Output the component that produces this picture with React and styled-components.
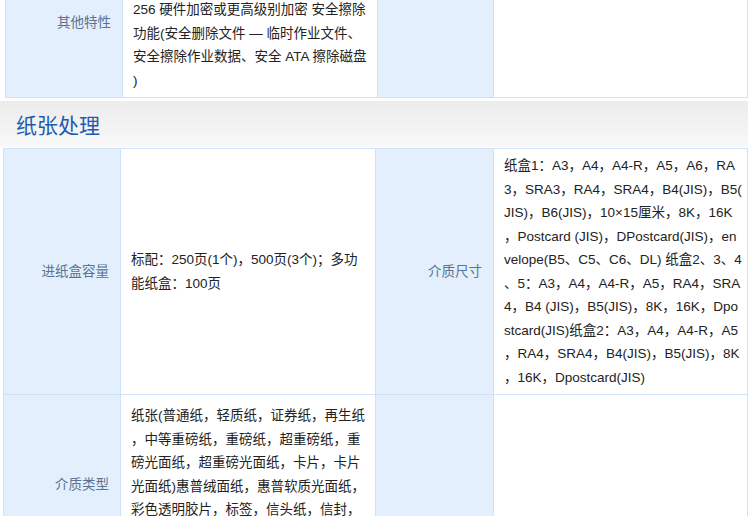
import React from "react";
import styled, { createGlobalStyle } from "styled-components";

const GlobalStyle = createGlobalStyle`
  * { box-sizing: border-box; }
  body {
    margin: 0;
    background: #fff;
    font-family: "Liberation Sans", "Noto Sans CJK SC", sans-serif;
    overflow: hidden;
  }
`;

const Page = styled.div`
  width: 748px;
  padding-left: 3px;
`;

const SpecTable = styled.div`
  display: grid;
  grid-template-columns: 117px 255px ${(p) => (p.$shift ? 118 - p.$shift : 118)}px 1fr;
  border-top: 1px solid #cfe2f6;
  border-left: 1px solid #cfe2f6;
  margin-top: ${(p) => p.$offset || 0}px;
  margin-left: ${(p) => p.$shift || 0}px;
`;

const Label = styled.div`
  display: flex;
  align-items: ${(p) => (p.$top ? "flex-start" : "center")};
  justify-content: flex-end;
  padding: ${(p) => p.$top || 0}px 11px 0 8px;
  background: #e3effd;
  color: #5a7393;
  font-size: 13.5px;
  line-height: 23.5px;
  border-right: 1px solid #cfe2f6;
  border-bottom: 1px solid #cfe2f6;
`;

const Value = styled.div`
  display: flex;
  align-items: ${(p) => (p.$pad ? "flex-start" : "center")};
  padding: ${(p) => p.$pad || 5}px ${(p) => p.$right || 6}px 5px 10px;
  color: #222;
  font-size: 13.5px;
  line-height: 23.5px;
  word-break: break-all;
  line-break: anywhere;
  border-right: 1px solid #cfe2f6;
  border-bottom: 1px solid #cfe2f6;
`;

const SectionHeader = styled.div`
  height: 46px;
  margin: 3px 0 1px -3px;
  display: flex;
  align-items: center;
  padding-left: 16px;
  background: linear-gradient(#ececec, #f8f8f8);
`;

const SectionTitle = styled.h2`
  margin: 0;
  font-size: 21px;
  font-weight: normal;
  color: #1d5bb3;
  font-family: "Noto Sans CJK SC", sans-serif;
`;

export default function App() {
  return (
    <Page>
      <GlobalStyle />
      <SpecTable $offset={-8} $shift={2}>
        <Label $top={18}>其他特性</Label>
        <Value $right={9}>
          256 硬件加密或更高级别加密 安全擦除功能(安全删除文件 — 临时作业文件、安全擦除作业数据、安全 ATA 擦除磁盘)
        </Value>
        <Label />
        <Value />
      </SpecTable>

      <SectionHeader>
        <SectionTitle>纸张处理</SectionTitle>
      </SectionHeader>

      <SpecTable>
        <Label>进纸盒容量</Label>
        <Value>标配：250页(1个)，500页(3个)；多功能纸盒：100页</Value>
        <Label>介质尺寸</Label>
        <Value $right={5}>
          纸盒1：A3，A4，A4-R，A5，A6，RA3，SRA3，RA4，SRA4，B4(JIS)，B5(JIS)，B6(JIS)，10×15厘米，8K，16K，Postcard (JIS)，DPostcard(JIS)，envelope(B5、C5、C6、DL) 纸盒2、3、4、5：A3，A4，A4-R，A5，RA4，SRA4，B4 (JIS)，B5(JIS)，8K，16K，Dpostcard(JIS)纸盒2：A3，A4，A4-R，A5，RA4，SRA4，B4(JIS)，B5(JIS)，8K，16K，Dpostcard(JIS)
        </Value>

        <Label>介质类型</Label>
        <Value $pad={9}>
          纸张(普通纸，轻质纸，证券纸，再生纸，中等重磅纸，重磅纸，超重磅纸，重磅光面纸，超重磅光面纸，卡片，卡片光面纸)惠普绒面纸，惠普软质光面纸，彩色透明胶片，标签，信头纸，信封，预打印纸，预打孔纸，彩纸，粗糙纸，用户自定义类型
        </Value>
        <Label />
        <Value />
      </SpecTable>
    </Page>
  );
}
